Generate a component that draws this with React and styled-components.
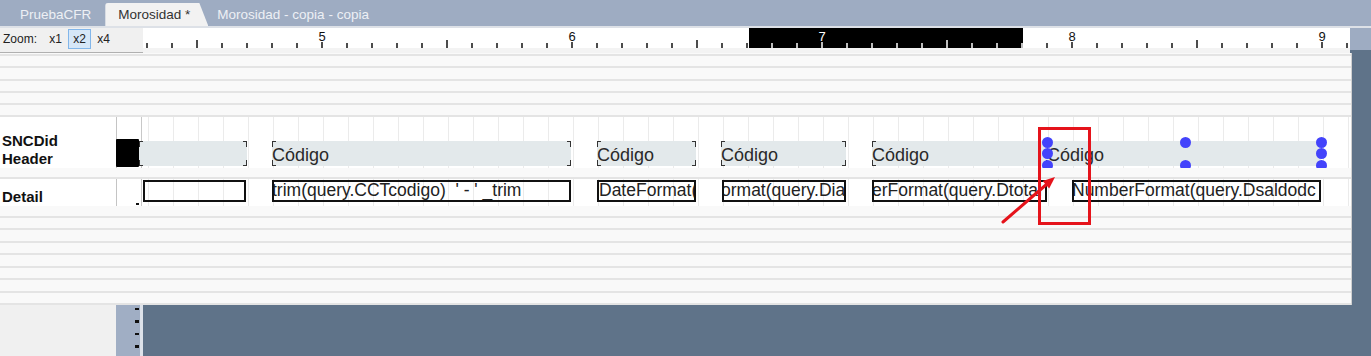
import React from "react";
import styled, { createGlobalStyle } from "styled-components";

const GlobalStyle = createGlobalStyle`
  html, body { margin: 0; padding: 0; background: #5f7389; }
  body { font-family: "Liberation Sans", Arial, sans-serif; }
  * { box-sizing: border-box; }
`;

const Screen = styled.div`
  position: relative;
  width: 1371px;
  height: 356px;
  overflow: hidden;
  display: flex;
  flex-direction: column;
  background: #5f7389;
`;

/* ---------- document tabs ---------- */
const TabStrip = styled.div`
  height: 26px;
  flex: none;
  display: flex;
  align-items: flex-end;
  padding-left: 8px;
  background: #9eacc2;
`;

const Tab = styled.div`
  height: 23px;
  display: flex;
  align-items: center;
  padding: ${(p) => (p.$active ? "0 18px 0 13px" : "0 12px 0 12px")};
  margin-left: ${(p) => p.$gap || 0}px;
  font-size: 13.5px;
  color: ${(p) => (p.$active ? "#333" : "#edf0f5")};
  background: ${(p) => (p.$active ? "#f2f2f2" : "transparent")};
  border-top-left-radius: ${(p) => (p.$active ? "3px" : "0")};
  clip-path: ${(p) =>
    p.$active ? "polygon(0 0, calc(100% - 9px) 0, 100% 100%, 0 100%)" : "none"};
  white-space: nowrap;
`;

/* ---------- zoom toolbar + ruler ---------- */
const ToolRow = styled.div`
  flex: none;
  height: 27px;
  display: flex;
  align-items: flex-start;
  border-top: 2px solid #dde1e7;
  background: #5f7389;
`;

const Toolbar = styled.div`
  width: 143px;
  height: 25px;
  flex: none;
  display: flex;
  align-items: flex-start;
  padding: 1px 0 0 3px;
  gap: 1px;
  background: #f0f0f0;
  border-bottom: 1px solid #b0b0b0;
`;

const ZoomLabel = styled.span`
  width: 40px;
  height: 20px;
  line-height: 20px;
  font-size: 12px;
  color: #222;
`;

const ZoomButton = styled.button`
  width: 23px;
  height: 20px;
  padding: 0;
  font-family: inherit;
  font-size: 12px;
  color: #222;
  background: ${(p) => (p.$active ? "#d6e7f8" : "transparent")};
  border: 1px solid ${(p) => (p.$active ? "#82b6ea" : "transparent")};
`;

const RulerBox = styled.div`
  width: 1207px;
  height: 25px;
  flex: none;
  background: #f3f3f3;
  svg { display: block; }
`;

const RulerEnd = styled.div`
  flex: 1;
  height: 22px;
  background: #9eacc2;
`;

/* ---------- design surface ---------- */
const Body = styled.div`
  flex: 1;
  display: flex;
  min-height: 0;
`;

const Page = styled.div`
  width: 1352px;
  flex: none;
  display: flex;
  flex-direction: column;
`;

const Canvas = styled.div`
  height: 252px;
  flex: none;
  display: flex;
  flex-direction: column;
  background: #f9f9f9;
  border-right: 1px solid #d0d0d0;
`;

const Stripe = styled.div`
  height: ${(p) => p.$h}px;
  flex: none;
  background: #f9f9f9;
  border-bottom: 2px solid #e4e4e4;
`;

const Band = styled.div`
  height: ${(p) => p.$h}px;
  flex: none;
  display: grid;
  grid-template-columns: 116px 1fr;
  background: #fff;
`;

const BandLabel = styled.div`
  display: flex;
  flex-direction: column;
  justify-content: flex-end;
  padding: 0 0 0 2px;
  font-size: 15px;
  font-weight: bold;
  line-height: 18px;
  color: #111;
  background: #fff;
`;

const Surface = styled.div`
  position: relative;
  overflow: hidden;
  background-color: #fff;
  background-image:
    linear-gradient(to right, #c4c4c4 0 1px, #fff 1px 25px, #c8c8c8 25px 26px, transparent 26px),
    repeating-linear-gradient(to right, #ebebeb 0 1px, transparent 1px 25px);
  background-position: 0 0, 32px 0;
`;

const SelectionMark = styled.div`
  position: absolute;
  left: 0;
  top: 22px;
  width: 23px;
  height: 28px;
  background: #000;
  border-radius: 1px;
`;

const HeaderField = styled.div`
  position: absolute;
  top: 24px;
  left: ${(p) => p.$x}px;
  width: ${(p) => p.$w}px;
  height: 25px;
  padding-top: 2px;
  background: #e3e9eb;
  font-size: 18px;
  line-height: 25px;
  color: #2a2a2a;
  white-space: nowrap;
  overflow: hidden;
`;

const Corner = styled.span`
  position: absolute;
  width: 4px;
  height: 6px;
  ${(p) => (p.$top ? "top: 0;" : "bottom: 0;")}
  ${(p) => (p.$left ? "left: 0;" : "right: 0;")}
  border-color: #333;
  border-style: solid;
  border-width: ${(p) =>
    `${p.$top ? 1.5 : 0}px ${p.$left ? 0 : 1.5}px ${p.$top ? 0 : 1.5}px ${p.$left ? 1.5 : 0}px`};
`;

const Handle = styled.span`
  position: absolute;
  left: ${(p) => p.$x}px;
  top: ${(p) => p.$y}px;
  width: 11px;
  height: 11px;
  margin: -5.5px 0 0 -5.5px;
  border-radius: 50%;
  background: #4343fb;
`;

const DetailField = styled.div`
  position: absolute;
  top: 1px;
  left: ${(p) => p.$x}px;
  width: ${(p) => p.$w}px;
  height: 22px;
  border: 2px solid #111;
  overflow: hidden;
  font-size: 17.5px;
  line-height: 17px;
  color: #222;
  white-space: pre;
  text-indent: ${(p) => p.$indent || 0}px;
`;

const GutterTick = styled.span`
  position: absolute;
  left: 20px;
  bottom: 1px;
  width: 3px;
  height: 2px;
  background: #111;
`;

/* ---------- area below the page ---------- */
const Foot = styled.div`
  flex: 1;
  display: flex;
`;

const FootPanel = styled.div`
  width: 116px;
  background: #f0f0f0;
`;

const SideRuler = styled.div`
  width: 24px;
  background-color: #a0aec4;
  background-image: repeating-linear-gradient(
    to bottom,
    transparent 0 3px,
    #111 3px 5px,
    transparent 5px 12.5px
  );
  background-size: 4px 100%;
  background-position: 19px 0;
  background-repeat: no-repeat;
`;

const SideEdge = styled.div`
  width: 3px;
  background: #dde2ea;
`;

const Backdrop = styled.div`
  flex: 1;
  background: #5f7389;
`;

/* ---------- red callout drawn over the surface ---------- */
const CalloutBox = styled.div`
  position: absolute;
  left: 1038px;
  top: 127px;
  width: 53px;
  height: 98px;
  border: 3px solid #e5131b;
  pointer-events: none;
`;

const CalloutArrow = styled.svg`
  position: absolute;
  left: 995px;
  top: 170px;
  pointer-events: none;
`;

function Ruler() {
  const marks = [];
  for (let i = 0; i < 49; i++) {
    const ax = 147 + 25 * i;
    const x = ax - 143;
    const inDark = ax >= 749 && ax <= 1023;
    const color = inDark ? "#fff" : "#111";
    const major = (ax - 322) % 250 === 0;
    const half = (ax - 197) % 250 === 0;
    const y1 = major ? 14 : half ? 12 : 15;
    marks.push(
      <line key={`t${i}`} x1={x} x2={x} y1={y1} y2={20} stroke={color} strokeWidth={1.5} />
    );
    if (major) {
      marks.push(
        <text
          key={`n${i}`}
          x={x}
          y={13}
          textAnchor="middle"
          fontSize="13"
          fontFamily="Liberation Sans, Arial, sans-serif"
          fill={color}
        >
          {5 + (ax - 322) / 250}
        </text>
      );
    }
  }
  return (
    <RulerBox>
      <svg width="1207" height="20" viewBox="0 0 1207 20">
        <rect x="0" y="0" width="1207" height="20" fill="#fff" />
        <rect x="606" y="0" width="274" height="20" fill="#000" />
        {marks}
      </svg>
    </RulerBox>
  );
}

function Brackets() {
  return (
    <>
      <Corner $top $left />
      <Corner $top />
      <Corner $left />
      <Corner />
    </>
  );
}

const headerFields = [
  { x: 23, w: 108, text: "" },
  { x: 156, w: 299, text: "Código" },
  { x: 481, w: 99, text: "Código" },
  { x: 605, w: 125, text: "Código" },
  { x: 756, w: 175, text: "Código" },
];

const detailFields = [
  { x: 27, w: 103, text: "", indent: 0 },
  { x: 156, w: 299, text: "trim(query.CCTcodigo)  ' - ' _trim", indent: -2 },
  { x: 481, w: 99, text: "DateFormat(", indent: 0 },
  { x: 606, w: 124, text: "ormat(query.Dia", indent: -3 },
  { x: 756, w: 175, text: "erFormat(query.Dtotal", indent: -2 },
  { x: 956, w: 249, text: "NumberFormat(query.Dsaldodc", indent: -2 },
];

const handles = [
  [931, 25], [931, 36], [931, 48],
  [1069, 25], [1069, 48],
  [1205, 25], [1205, 36], [1205, 48],
];

const topStripes = [3, 12, 13, 12, 12, 12];
const bottomStripes = [12, 12, 13, 12, 13, 12, 13, 12];

export default function App() {
  return (
    <>
      <GlobalStyle />
      <Screen>
        <TabStrip>
          <Tab>PruebaCFR</Tab>
          <Tab $active $gap={2}>Morosidad *</Tab>
          <Tab style={{ paddingLeft: 9 }}>Morosidad - copia - copia</Tab>
        </TabStrip>

        <ToolRow>
          <Toolbar>
            <ZoomLabel>Zoom:</ZoomLabel>
            <ZoomButton>x1</ZoomButton>
            <ZoomButton $active>x2</ZoomButton>
            <ZoomButton>x4</ZoomButton>
          </Toolbar>
          <Ruler />
          <RulerEnd />
        </ToolRow>

        <Body>
          <Page>
            <Canvas>
              {topStripes.map((h, i) => (
                <Stripe key={`a${i}`} $h={h} />
              ))}

              <Band $h={51}>
                <BandLabel>
                  <span>SNCDid</span>
                  <span>Header</span>
                </BandLabel>
                <Surface>
                  <SelectionMark />
                  {headerFields.map((f, i) => (
                    <HeaderField key={i} $x={f.x} $w={f.w}>
                      {f.text}
                      <Brackets />
                    </HeaderField>
                  ))}
                  <HeaderField $x={931} $w={274}>Código</HeaderField>
                  {handles.map(([x, y], i) => (
                    <Handle key={i} $x={x} $y={y} />
                  ))}
                </Surface>
              </Band>

              <Stripe $h={11} />

              <Band $h={27}>
                <BandLabel>
                  <span>Detail</span>
                </BandLabel>
                <Surface>
                  <GutterTick />
                  {detailFields.map((f, i) => (
                    <DetailField key={i} $x={f.x} $w={f.w} $indent={f.indent}>
                      {f.text}
                    </DetailField>
                  ))}
                </Surface>
              </Band>

              {bottomStripes.map((h, i) => (
                <Stripe key={`b${i}`} $h={h} />
              ))}
            </Canvas>

            <Foot>
              <FootPanel />
              <SideRuler />
              <SideEdge />
              <Backdrop />
            </Foot>
          </Page>
          <Backdrop />
        </Body>

        <CalloutBox />
        <CalloutArrow width="70" height="60" viewBox="0 0 70 60">
          <line x1="8" y1="52" x2="52" y2="14" stroke="#e5131b" strokeWidth="3" strokeLinecap="round" />
          <polygon points="60,7 54.2,18.6 47.6,11" fill="#e5131b" />
        </CalloutArrow>
      </Screen>
    </>
  );
}
